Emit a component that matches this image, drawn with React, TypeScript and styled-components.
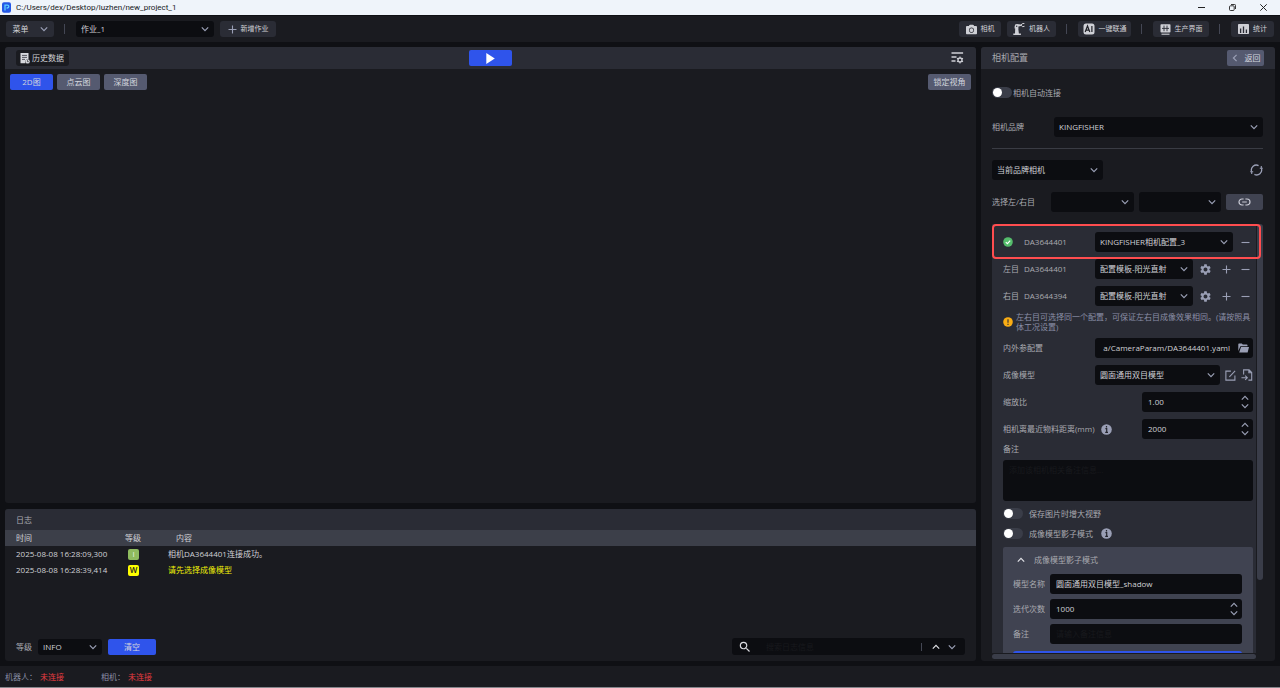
import React from "react";
import styled, { createGlobalStyle, css } from "styled-components";
import { FaCamera } from "react-icons/fa";
import { MdSettings, MdSearch } from "react-icons/md";

const c = {
  base: "#0f1014",
  panel: "#1a1b20",
  raised: "#2a2c35",
  tableHead: "#3c3f49",
  card: "#404351",
  field: "#0c0d11",
  slate: "#555a70",
  blue: "#2f54eb",
  text: "#d0d1d6",
  label: "#a9aab0",
  icon: "#9a9fb5",
  hint: "#8a8fa6",
  placeholder: "#18191d",
  red: "#e63b40",
};

const GlobalStyle = createGlobalStyle`
  *, *::before, *::after { box-sizing: border-box; }
  body {
    margin: 0;
    background: ${c.base};
    color: ${c.text};
    font: 8px/10px "Open Sans", "Noto Sans CJK SC", sans-serif;
  }
  button, input, select, textarea { font: inherit; color: inherit; border: 0; margin: 0; padding: 0; background: none; outline: none; }
  button { cursor: pointer; white-space: nowrap; }
  svg { display: block; flex: none; }
  h1, h2, p { margin: 0; font: inherit; }
`;

/* ---------- icons ---------- */

type ChevronProps = { dir?: "down" | "up" | "left"; size?: number; color?: string };
const turns = { down: 0, up: 180, left: 90 };
const Chevron = ({ dir = "down", size = 8, color = c.icon }: ChevronProps) => (
  <svg width={size} height={size} viewBox="0 0 8 8" fill="none" stroke={color} strokeWidth="1.2">
    <path d="M.8 2.4 4 5.6 7.2 2.4" transform={`rotate(${turns[dir]} 4 4)`} />
  </svg>
);
const Plus = () => (
  <svg width="9" height="9" viewBox="0 0 9 9" stroke={c.icon} strokeWidth="1.1"><path d="M4.5 .5v8M.5 4.5h8" /></svg>
);
const Minus = () => (
  <svg width="9" height="9" viewBox="0 0 9 9" stroke={c.icon} strokeWidth="1.1"><path d="M.5 4.5h8" /></svg>
);
const AppLogo = () => (
  <svg width="9" height="11" viewBox="0 0 9 11">
    <rect width="9" height="10.5" y=".2" rx="2" fill="#2457e6" />
    <path d="M3 8.4V3.2h2.4a1.3 1.3 0 0 1 0 2.8H4.6" fill="none" stroke="#5fd0ff" strokeWidth="1.3" />
  </svg>
);
const HistoryIcon = () => (
  <svg width="10" height="11" viewBox="0 0 10 11">
    <path d="M.5 0h8v6a3 3 0 0 0-3 4.3H.5z" fill="#d6d7dc" />
    <path d="M2 2.4h5M2 4.4h5M2 6.4h3" stroke="#33353d" strokeWidth=".8" />
    <circle cx="7.6" cy="8.4" r="2.2" fill="#d6d7dc" />
    <path d="M7.5 7.2v1.4h1.2" fill="none" stroke="#1a1b20" strokeWidth=".7" />
  </svg>
);
const RobotArm = () => (
  <svg width="12" height="12" viewBox="0 0 12 12" fill="#cfd0d6">
    <path d="M.3 10.4h7.6V12H.3zM2 10.6 2.2 5h3l.7 5.6z" />
    <path d="M1.6 5.4V3.4a2.3 2.3 0 0 1 2.3-2.3L8 1.5v1.6L5.4 3.5v1.9z" />
    <path d="M8 2.2 9.2.7l2.2-.3M8 2.2l1.7 1.5 1.8-.4" fill="none" stroke="#cfd0d6" strokeWidth="1" />
    <circle cx="3.7" cy="3.3" r=".7" fill="#2a2c35" />
  </svg>
);
const AiIcon = () => (
  <svg width="12" height="12" viewBox="0 0 12 12">
    <rect x=".5" y=".5" width="11" height="11" rx="2.5" fill="#cfd0d6" />
    <path d="M2.2 9 4.5 3 6.8 9M3 7.2h3M8.9 3v6" fill="none" stroke="#1f2026" strokeWidth="1.2" />
  </svg>
);
const ScreenIcon = () => (
  <svg width="11" height="11" viewBox="0 0 11 11">
    <rect x=".5" y=".2" width="10" height="8.4" rx=".8" fill="#cfd0d6" />
    <path d="M2 4.4h7M4 1.6v5.6M7 1.6v5.6" stroke="#2a2c35" strokeWidth=".9" />
    <path d="M1.5 10.2h8" stroke="#cfd0d6" strokeWidth="1.1" />
  </svg>
);
const StatsIcon = () => (
  <svg width="11" height="10" viewBox="0 0 11 10">
    <rect width="11" height="10" rx=".8" fill="#cfd0d6" />
    <path d="M2.6 9V4.6M5.5 9V2.6M8.4 9V5.6" stroke="#2a2c35" strokeWidth="1.3" />
  </svg>
);
const ListSettings = () => (
  <svg width="13" height="12" viewBox="0 0 13 12" fill="none" stroke="#cfd0d6">
    <path d="M.5 1h11.6M.5 5h5M.5 9h4" strokeWidth="1.4" />
    <circle cx="9" cy="8" r="2" strokeWidth="1.3" />
    <path d="M9 4.5v1.3M9 10.2v1.3M6 6.3l1.1.6M10.9 9.1l1.1.6M6 9.7l1.1-.6M10.9 6.9l1.1-.6" strokeWidth="1.1" />
  </svg>
);
const PlayIcon = () => (
  <svg width="9" height="11" viewBox="0 0 9 11" fill="#fff"><path d="M.3 0 8.8 5.5.3 11z" /></svg>
);
const RefreshIcon = () => (
  <svg width="13" height="12" viewBox="0 0 13 12" fill="none" stroke={c.icon} strokeWidth="1.3">
    <path d="M1.6 7.6A5 5 0 0 1 8.6 1.6M11.4 4.4a5 5 0 0 1-7 6" />
    <path d="M9.8 4.2h3M11.3 4.4V2M.2 7.8h3M1.7 7.6V10" strokeWidth="1.1" />
  </svg>
);
const LinkIcon = () => (
  <svg width="13" height="8" viewBox="0 0 13 8" fill="none" stroke="#c9cbd6" strokeWidth="1.2">
    <path d="M5.6 1H4a3 3 0 0 0 0 6h1.6M7.4 1H9a3 3 0 0 1 0 6H7.4M4.2 4h4.6" />
  </svg>
);
const OkIcon = () => (
  <svg width="10" height="10" viewBox="0 0 10 10">
    <circle cx="5" cy="5" r="4.8" fill="#55bd6c" />
    <path d="m2.8 5.1 1.6 1.5 2.8-3" fill="none" stroke="#fff" strokeWidth="1.1" />
  </svg>
);
const WarnIcon = () => (
  <svg width="10" height="10" viewBox="0 0 10 10">
    <circle cx="5" cy="5" r="4.8" fill="#faad14" />
    <path d="M5 2.2v3.6M5 6.8V8" stroke="#2a2c35" strokeWidth="1.1" />
  </svg>
);
const InfoIcon = () => (
  <svg width="11" height="11" viewBox="0 0 11 11">
    <circle cx="5.5" cy="5.5" r="5.3" fill={c.icon} />
    <path d="M5.5 2v1.4M4.4 4.7h1.3v3.6M4.2 8.4h2.8" fill="none" stroke="#23252d" strokeWidth="1.2" />
  </svg>
);
const FolderIcon = () => (
  <svg width="11" height="10" viewBox="0 0 11 10" fill={c.icon}>
    <path d="M.3 8V1.2A.7.7 0 0 1 1 .5h2.8l1 1.1h4a.7.7 0 0 1 .7.7v.9H2.4z" />
    <path d="M3 4h8L9.6 9.5H1.2z" />
  </svg>
);
const EditIcon = () => (
  <svg width="11" height="11" viewBox="0 0 10 10" fill="none" stroke={c.icon} strokeWidth="1">
    <path d="M5.4 1H.8v8.2H9V5M4 6.2 9.2.8" />
  </svg>
);
const ImportIcon = () => (
  <svg width="12" height="12" viewBox="0 0 11 11" fill="none" stroke={c.icon} strokeWidth="1">
    <path d="M2.4 5V.8h5l2.4 2.4v7H6.8M7.2 1v2.4h2.4M.4 8h5M3.8 6l2 2-2 2" />
  </svg>
);
const RestoreIcon = () => (
  <svg width="7" height="7" viewBox="0 0 7 7" fill="none" stroke="#222" strokeWidth=".9">
    <rect x=".5" y="1.8" width="4.7" height="4.7" rx="1" /><path d="M2 .5h3.4a1 1 0 0 1 1.1 1.1V5" />
  </svg>
);

/* ---------- shell ---------- */

const Shell = styled.div`
  display: flex;
  flex-direction: column;
  height: 100vh;
  border-bottom: 1px solid #85868c;
`;
const TitleBar = styled.header`
  display: flex;
  align-items: center;
  gap: 5px;
  height: 15px;
  flex: none;
  padding: 0 13px 0 2px;
  background: #eff4fa;
  color: #16181d;
  font-family: Roboto, "Noto Sans CJK SC", sans-serif;
`;
const WindowButtons = styled.div`
  display: flex;
  align-items: center;
  gap: 24px;
  margin-left: auto;
  button { width: 7px; height: 7px; }
`;
const Toolbar = styled.nav`
  display: flex;
  align-items: center;
  gap: 6px;
  height: 26px;
  flex: none;
  margin-top: 1px;
  padding: 0 6px;
  background: ${c.panel};
`;
const Separator = styled.span`
  width: 1px;
  height: 10px;
  margin: 0 5px 0 4px;
  background: #444754;
`;
const Spacer = styled.span`flex: 1;`;
const ToolButton = styled.button<{ $w: number; $gap?: number; $small?: boolean }>`
  display: flex;
  align-items: center;
  justify-content: center;
  gap: ${(p) => p.$gap ?? 4}px;
  width: ${(p) => p.$w}px;
  height: 16px;
  border-radius: 3px;
  font-size: ${(p) => (p.$small ? 7 : 8)}px;
  background: ${c.raised};
`;
const Main = styled.main`
  display: flex;
  flex: 1;
  min-height: 0;
  gap: 5px;
  padding: 5px;
`;
const Work = styled.div`
  display: flex;
  flex: 1;
  min-width: 0;
  flex-direction: column;
  gap: 6px;
`;
const Panel = styled.section<{ $h?: number }>`
  display: flex;
  flex-direction: column;
  min-height: 0;
  min-width: 0;
  border-radius: 3px;
  overflow: hidden;
  background: ${c.panel};
  ${(p) => (p.$h ? css`height: ${p.$h}px; flex: none;` : css`flex: 1;`)}
`;
const ViewHeader = styled.div`
  display: grid;
  grid-template-columns: 1fr auto 1fr;
  align-items: center;
  height: 22px;
  flex: none;
  padding: 0 12px 0 11px;
  background: ${c.raised};
`;
const HistoryButton = styled.button`
  display: flex;
  align-items: center;
  gap: 2px;
  justify-self: start;
  height: 16px;
  padding: 0 5px 0 4px;
  border-radius: 3px;
  background: ${c.panel};
`;
const FilledButton = styled.button<{ $tone?: "blue" | "slate" | "card"; $w: number }>`
  display: flex;
  align-items: center;
  justify-content: center;
  gap: 6px;
  width: ${(p) => p.$w}px;
  height: 16px;
  flex: none;
  border-radius: 2px;
  font-size: 8px;
  color: #d3d5de;
  background: ${(p) => (p.$tone === "blue" ? c.blue : p.$tone === "card" ? c.card : c.slate)};
`;
const IconButton = styled.button<{ $end?: boolean }>`
  display: grid;
  place-items: center;
  flex: none;
  justify-self: ${(p) => (p.$end ? "end" : "auto")};
`;
const ViewTabs = styled.div`
  display: flex;
  gap: 4px;
  padding: 5px 5px 0;
`;
const PanelHeader = styled.div<{ $large?: boolean }>`
  display: flex;
  align-items: center;
  justify-content: space-between;
  height: ${(p) => (p.$large ? 22 : 21)}px;
  flex: none;
  padding: 0 11px;
  font-size: ${(p) => (p.$large ? 9 : 8)}px;
  color: ${c.label};
  background: ${c.raised};
`;

/* ---------- fields ---------- */

const SelectFrame = styled.span<{ $w?: number; $h?: number }>`
  display: grid;
  align-items: center;
  ${(p) => (p.$w ? css`width: ${p.$w}px; flex: none;` : css`flex: 1; min-width: 0;`)}
  height: ${(p) => p.$h ?? 20}px;
  border-radius: 3px;
  background: ${c.field};
  > * { grid-area: 1 / 1; }
  > svg { justify-self: end; margin-right: 5px; pointer-events: none; }
`;
const NativeSelect = styled.select`
  appearance: none;
  width: 100%;
  height: 100%;
  padding: 0 16px 0 5px;
  color: ${c.text};
`;
type SelectProps = { w?: number; h?: number; value: string; label: string; id?: string };
const Select = ({ w, h, value, label, id }: SelectProps) => (
  <SelectFrame $w={w} $h={h}>
    <NativeSelect id={id} aria-label={label} defaultValue={value}>
      <option value={value}>{value}</option>
    </NativeSelect>
    <Chevron />
  </SelectFrame>
);
const FieldFrame = styled.span<{ $w?: number }>`
  display: flex;
  align-items: center;
  gap: 8px;
  ${(p) => (p.$w ? css`width: ${p.$w}px; flex: none;` : css`flex: 1; min-width: 0;`)}
  height: 20px;
  padding: 0 4px 0 6px;
  border-radius: 3px;
  background: ${c.field};
  input { flex: 1; min-width: 0; }
  input::placeholder { color: ${c.placeholder}; }
`;
const Spin = styled.span`
  display: grid;
`;
const NumberField = ({ w, id, value }: { w?: number; id: string; value: string }) => (
  <FieldFrame $w={w}>
    <input id={id} inputMode="decimal" defaultValue={value} />
    <Spin>
      <IconButton aria-label="增加"><Chevron dir="up" /></IconButton>
      <IconButton aria-label="减少"><Chevron /></IconButton>
    </Spin>
  </FieldFrame>
);
const Switch = styled.input`
  appearance: none;
  display: flex;
  align-items: center;
  width: 20px;
  height: 11px;
  flex: none;
  padding: 0 1px;
  border-radius: 6px;
  background: #3a3d48;
  &::before {
    content: "";
    width: 9px;
    height: 9px;
    border-radius: 50%;
    background: #fff;
  }
  &:checked { justify-content: flex-end; background: ${c.blue}; }
`;
const SwitchLabel = styled.label<{ $gap?: number }>`
  display: flex;
  align-items: center;
  gap: ${(p) => p.$gap ?? 0}px;
  color: ${c.label};
`;

/* ---------- log ---------- */

const LogTable = styled.table`
  width: 100%;
  border-collapse: collapse;
  table-layout: fixed;
  th, td { height: 16px; padding: 0; text-align: left; font-weight: 400; }
  th { background: ${c.tableHead}; }
  th:first-child, td:first-child { width: 120px; padding-left: 11px; }
  th:nth-child(2), td:nth-child(2) { width: 43px; }
  th:nth-child(3) { padding-left: 8px; }
  td:nth-child(2) { padding-left: 3px; }
`;
const Level = styled.span<{ $warn?: boolean }>`
  display: grid;
  place-items: center;
  width: 11px;
  height: 11px;
  border-radius: 2px;
  color: ${(p) => (p.$warn ? "#1a1b20" : "#e8f3df")};
  background: ${(p) => (p.$warn ? "#ffff00" : "#8fbc5f")};
  font-weight: ${(p) => (p.$warn ? 600 : 400)};
`;
const WarnText = styled.span`color: #f0f008;`;
const LogFooter = styled.div`
  display: flex;
  align-items: center;
  gap: 6px;
  margin-top: auto;
  padding: 0 11px 6px;
  color: ${c.label};
`;
const SearchBox = styled.div`
  display: flex;
  align-items: center;
  gap: 8px;
  width: 233px;
  height: 17px;
  padding: 0 9px 0 6px;
  border-radius: 3px;
  color: #d8d9de;
  background: ${c.field};
  input { flex: 1; min-width: 0; padding-left: 6px; }
  input::placeholder { color: ${c.placeholder}; }
`;
const SearchDivider = styled.span`
  width: 1px;
  height: 8px;
  margin-right: 2px;
  background: #444754;
`;

/* ---------- camera configuration ---------- */

const Side = styled.aside`
  display: flex;
  width: 294px;
  flex: none;
`;
const ConfigTop = styled.div`
  display: flex;
  flex-direction: column;
  padding: 18px 12px 0 11px;
`;
const Row = styled.div<{ $top?: number; $gap?: number }>`
  display: flex;
  align-items: center;
  gap: ${(p) => p.$gap ?? 5}px;
  margin-top: ${(p) => p.$top ?? 0}px;
  color: ${c.label};
  input { color: ${c.text}; }
`;
const Label = styled.label<{ $w?: number }>`
  ${(p) => (p.$w ? css`width: ${p.$w}px;` : css`flex: 1;`)}
  flex-shrink: 0;
  color: ${c.label};
`;
const Rule = styled.hr`
  width: 100%;
  height: 1px;
  margin: 11px 0;
  border: 0;
  background: #3a3c44;
`;
const ScrollFrame = styled.div`
  display: grid;
  grid-template: minmax(0, 1fr) 6px / minmax(0, 1fr) 6px;
  column-gap: 1px;
  row-gap: 1px;
  flex: 1;
  min-height: 0;
  margin: 12px 12px 1px 11px;
  position: relative;
`;
const ScrollBody = styled.div`
  overflow: auto;
  scrollbar-width: none;
  padding: 8px 3px 0 11px;
  background: ${c.raised};
`;
const Thumb = styled.span<{ $vertical?: boolean }>`
  border-radius: 3px;
  background: #3a3d49;
  ${(p) => (p.$vertical ? css`height: 83%;` : css`height: 5px;`)}
`;
const Highlight = styled.div`
  position: absolute;
  inset: 0 2px auto 0;
  height: 35px;
  border: 2px solid #ff4d4f;
  border-radius: 4px;
  pointer-events: none;
`;
const Stack = styled.div<{ $gap: number }>`
  display: flex;
  flex-direction: column;
  gap: ${(p) => p.$gap}px;
`;
const Device = styled.span`
  display: grid;
  grid-template-columns: 21px 1fr;
  align-items: center;
  width: 92px;
  flex: none;
`;
const Actions = styled.span<{ $w: number }>`
  display: flex;
  align-items: center;
  gap: 10px;
  width: ${(p) => p.$w}px;
  flex: none;
  padding: 0 3px 0 6px;
  > :last-child { margin-left: auto; }
`;
const Hint = styled.p`
  display: flex;
  align-items: center;
  gap: 3px;
  height: 20px;
  margin: -1px 0;
  color: ${c.hint};
`;
const PathInput = styled.input`text-align: right;`;
const InfoGap = styled.span`padding-left: 2px;`;
const Notes = styled.textarea`
  display: block;
  width: 100%;
  height: 41px;
  margin: 6px 0 7px;
  padding: 5px 6px;
  resize: none;
  border-radius: 3px;
  background: ${c.field};
  &::placeholder { color: ${c.placeholder}; }
`;
const ShadowCard = styled.div`
  display: flex;
  flex-direction: column;
  gap: 5px;
  margin-top: 8px;
  padding: 8px 11px 8px 10px;
  border-radius: 2px;
  background: ${c.card};
`;
const ShadowTitle = styled.button`
  display: flex;
  align-items: center;
  gap: 9px;
  padding: 0 4px 4px;
  color: ${c.label};
`;
const SubmitButton = styled.button`
  height: 20px;
  flex: none;
  margin-top: 2px;
  border-radius: 3px;
  color: #fff;
  background: ${c.blue};
`;

const StatusBar = styled.footer`
  display: flex;
  align-items: center;
  gap: 37px;
  height: 21px;
  flex: none;
  padding: 0 5px;
  color: ${c.hint};
  background: ${c.panel};
`;
const Status = styled.span`
  display: flex;
  gap: 3px;
  b { font-weight: 400; color: ${c.red}; }
`;

const LOGS = [
  { time: "2025-08-08 16:28:09,300", level: "I", text: "相机DA3644401连接成功。" },
  { time: "2025-08-08 16:28:39,414", level: "W", text: "请先选择成像模型" },
];
const EYES = [
  { side: "左目", serial: "DA3644401" },
  { side: "右目", serial: "DA3644394" },
];

const ConfigPanel = () => (
  <Side>
    <Panel>
      <PanelHeader $large>
        <h2>相机配置</h2>
        <FilledButton $w={37}><Chevron dir="left" />返回</FilledButton>
      </PanelHeader>
      <ConfigTop>
        <SwitchLabel $gap={1}><Switch type="checkbox" role="switch" />相机自动连接</SwitchLabel>
        <Row $top={19} $gap={0}>
          <Label $w={62} htmlFor="brand">相机品牌</Label>
          <Select id="brand" label="相机品牌" value="KINGFISHER" />
        </Row>
        <Rule />
        <Row>
          <Select w={111} label="相机范围" value="当前品牌相机" />
          <Spacer />
          <IconButton aria-label="刷新"><RefreshIcon /></IconButton>
        </Row>
        <Row $top={12}>
          <Label $w={54} htmlFor="left-eye">选择左/右目</Label>
          <Select id="left-eye" label="左目" value="" />
          <Select label="右目" value="" />
          <FilledButton $tone="card" $w={37} aria-label="关联"><LinkIcon /></FilledButton>
        </Row>
      </ConfigTop>
      <ScrollFrame>
        <ScrollBody>
          <Stack $gap={7}>
            <Row $gap={0}>
              <Device><OkIcon />DA3644401</Device>
              <Select label="相机配置" value="KINGFISHER相机配置_3" />
              <Actions $w={20}>
                <IconButton aria-label="删除"><Minus /></IconButton>
              </Actions>
            </Row>
            {EYES.map((eye) => (
              <Row key={eye.side} $gap={0}>
                <Device><span>{eye.side}</span>{eye.serial}</Device>
                <Select label={eye.side} value="配置模板-阳光直射" />
                <Actions $w={60}>
                  <IconButton aria-label="设置"><MdSettings size={13} color={c.icon} /></IconButton>
                  <IconButton aria-label="添加"><Plus /></IconButton>
                  <IconButton aria-label="删除"><Minus /></IconButton>
                </Actions>
              </Row>
            ))}
            <Hint><WarnIcon /><span>左右目可选择同一个配置，可保证左右目成像效果相同。(请按照具体工况设置)</span></Hint>
            <Row $gap={0}>
              <Label $w={92} htmlFor="param">内外参配置</Label>
              <FieldFrame>
                <PathInput id="param" defaultValue="a/CameraParam/DA3644401.yaml" />
                <IconButton aria-label="打开"><FolderIcon /></IconButton>
              </FieldFrame>
            </Row>
            <Row>
              <Label $w={87} htmlFor="model">成像模型</Label>
              <Select id="model" label="成像模型" value="圆面通用双目模型" />
              <IconButton aria-label="编辑"><EditIcon /></IconButton>
              <IconButton aria-label="导入"><ImportIcon /></IconButton>
            </Row>
            <Row>
              <Label htmlFor="scale">缩放比</Label>
              <NumberField w={111} id="scale" value="1.00" />
            </Row>
            <Row>
              <Label $w={93} htmlFor="distance">相机离最近物料距离(mm)</Label>
              <InfoIcon />
              <Spacer />
              <NumberField w={111} id="distance" value="2000" />
            </Row>
          </Stack>
          <Row $top={5}><Label htmlFor="notes">备注</Label></Row>
          <Notes id="notes" placeholder="添加该相机相关备注信息..." />
          <Stack $gap={9}>
            <SwitchLabel $gap={6}><Switch type="checkbox" role="switch" />保存图片时增大视野</SwitchLabel>
            <SwitchLabel $gap={6}><Switch type="checkbox" role="switch" />成像模型影子模式<InfoGap><InfoIcon /></InfoGap></SwitchLabel>
          </Stack>
          <ShadowCard>
            <ShadowTitle><Chevron dir="up" color="#e0e1e6" />成像模型影子模式</ShadowTitle>
            <Row>
              <Label $w={32} htmlFor="shadow-name">模型名称</Label>
              <FieldFrame><input id="shadow-name" defaultValue="圆面通用双目模型_shadow" /></FieldFrame>
            </Row>
            <Row>
              <Label $w={32} htmlFor="iterations">迭代次数</Label>
              <NumberField id="iterations" value="1000" />
            </Row>
            <Row>
              <Label $w={32} htmlFor="shadow-notes">备注</Label>
              <FieldFrame><input id="shadow-notes" placeholder="请输入备注信息" /></FieldFrame>
            </Row>
            <SubmitButton aria-label="提交" />
          </ShadowCard>
        </ScrollBody>
        <Thumb $vertical />
        <Thumb />
        <Highlight />
      </ScrollFrame>
    </Panel>
  </Side>
);

export default function App() {
  return (
    <>
      <GlobalStyle />
      <Shell>
        <TitleBar>
          <AppLogo />
          <h1>C:/Users/dex/Desktop/luzhen/new_project_1</h1>
          <WindowButtons>
            <button aria-label="最小化"><svg width="7" height="7" viewBox="0 0 7 7" stroke="#222"><path d="M0 3.5h7" /></svg></button>
            <button aria-label="还原"><RestoreIcon /></button>
            <button aria-label="关闭"><svg width="7" height="7" viewBox="0 0 7 7" stroke="#222"><path d="m.3.3 6.4 6.4M6.7.3.3 6.7" /></svg></button>
          </WindowButtons>
        </TitleBar>
        <Toolbar>
          <ToolButton $w={48} $gap={11}>菜单<Chevron /></ToolButton>
          <Separator />
          <Select w={138} h={16} label="作业" value="作业_1" />
          <ToolButton $w={56} $gap={4} $small><Plus />新增作业</ToolButton>
          <Spacer />
          <ToolButton $w={42} $small><FaCamera size={11} color="#cfd0d6" />相机</ToolButton>
          <ToolButton $w={49} $small><RobotArm />机器人</ToolButton>
          <Separator />
          <ToolButton $w={53} $small><AiIcon />一键联通</ToolButton>
          <Separator />
          <ToolButton $w={56} $small><ScreenIcon />生产界面</ToolButton>
          <Separator />
          <ToolButton $w={43} $small><StatsIcon />统计</ToolButton>
        </Toolbar>
        <Main>
          <Work>
            <Panel>
              <ViewHeader>
                <HistoryButton><HistoryIcon />历史数据</HistoryButton>
                <FilledButton $tone="blue" $w={43} aria-label="运行"><PlayIcon /></FilledButton>
                <IconButton $end aria-label="视图设置"><ListSettings /></IconButton>
              </ViewHeader>
              <ViewTabs>
                <FilledButton $tone="blue" $w={43}>2D图</FilledButton>
                <FilledButton $w={43}>点云图</FilledButton>
                <FilledButton $w={43}>深度图</FilledButton>
                <Spacer />
                <FilledButton $w={43}>锁定视角</FilledButton>
              </ViewTabs>
            </Panel>
            <Panel $h={152}>
              <PanelHeader><h2>日志</h2></PanelHeader>
              <LogTable>
                <thead><tr><th>时间</th><th>等级</th><th>内容</th></tr></thead>
                <tbody>
                  {LOGS.map((log) => (
                    <tr key={log.time}>
                      <td>{log.time}</td>
                      <td><Level $warn={log.level === "W"}>{log.level}</Level></td>
                      <td>{log.level === "W" ? <WarnText>{log.text}</WarnText> : log.text}</td>
                    </tr>
                  ))}
                </tbody>
              </LogTable>
              <LogFooter>
                <label htmlFor="level">等级</label>
                <Select id="level" w={64} h={16} label="等级" value="INFO" />
                <FilledButton $tone="blue" $w={48}>清空</FilledButton>
                <Spacer />
                <SearchBox>
                  <MdSearch size={14} />
                  <input aria-label="搜索日志信息" placeholder="搜索日志信息" />
                  <SearchDivider />
                  <IconButton aria-label="上一个"><Chevron dir="up" color="#e0e1e6" /></IconButton>
                  <IconButton aria-label="下一个"><Chevron /></IconButton>
                </SearchBox>
              </LogFooter>
            </Panel>
          </Work>
          <ConfigPanel />
        </Main>
        <StatusBar>
          <Status>机器人：<b>未连接</b></Status>
          <Status>相机：<b>未连接</b></Status>
        </StatusBar>
      </Shell>
    </>
  );
}
